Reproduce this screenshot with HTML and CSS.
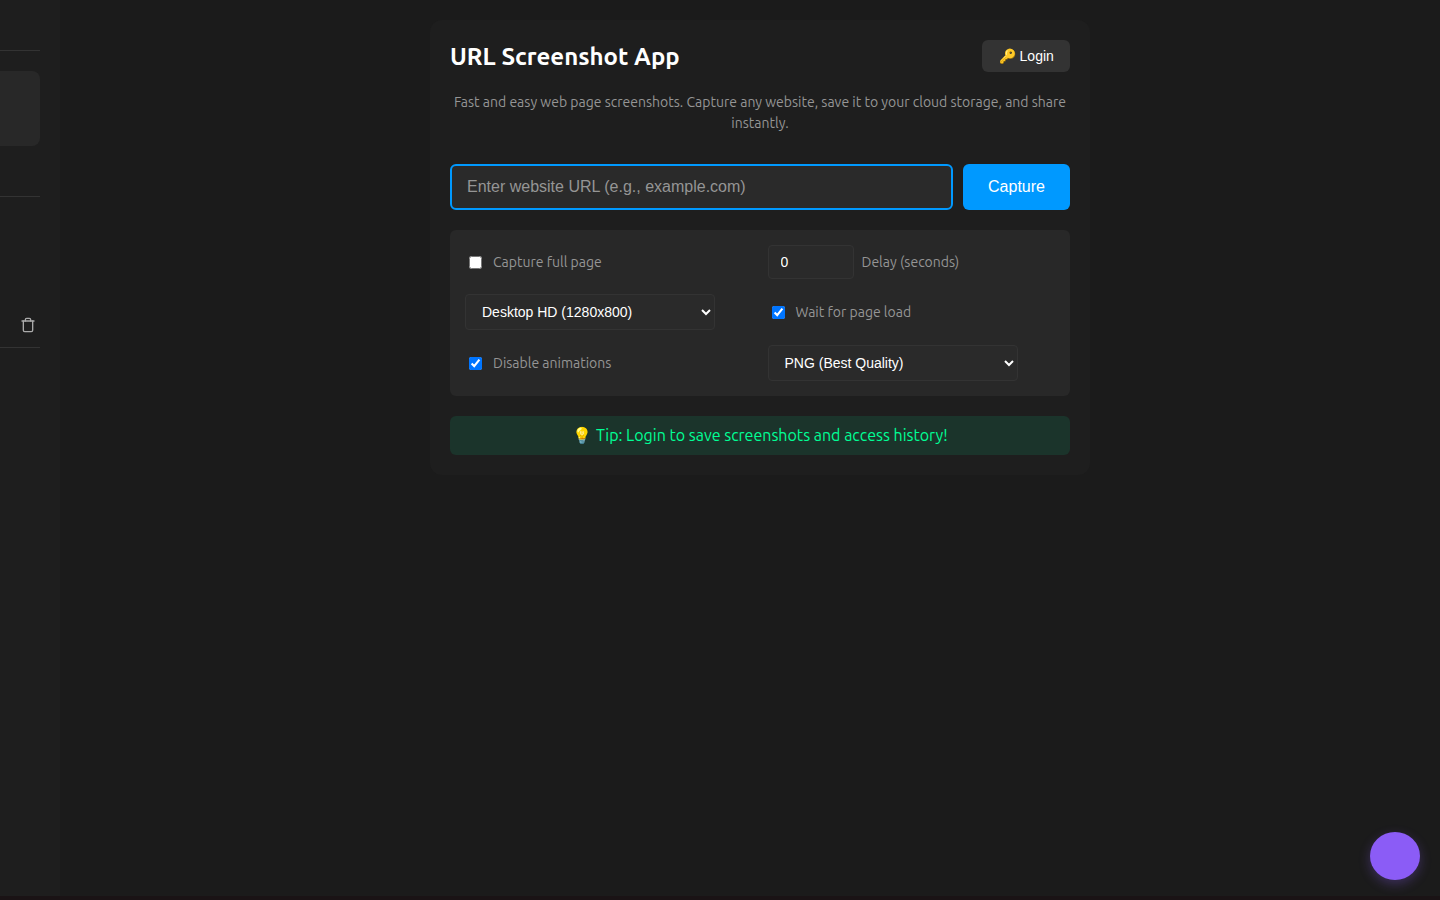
FILE: index.html
```
<!DOCTYPE html>
<html lang="en">
<head>
	<meta charset="UTF-8">
	<title>URL Screenshot App</title>
	<link rel="stylesheet" href="styles.css">
</head>
<body>
<div class="page">
	<aside class="sidebar">
		<div class="side-top"></div>
		<div class="side-user"></div>
		<div class="side-space"></div>
		<div class="side-history">
			<svg class="trash" width="16" height="16" viewBox="0 0 24 24" fill="none" stroke="currentColor" stroke-width="2" stroke-linecap="round" stroke-linejoin="round">
				<path d="M3 6h18"/>
				<path d="M19 6v14a2 2 0 0 1-2 2H7a2 2 0 0 1-2-2V6m3 0V4a2 2 0 0 1 2-2h4a2 2 0 0 1 2 2v2"/>
			</svg>
		</div>
	</aside>
	<main class="main">
		<div class="card">
			<div class="header">
				<h1>URL Screenshot App</h1>
				<button class="login">🔑 Login</button>
			</div>
			<p class="desc">Fast and easy web page screenshots. Capture any website, save it to your cloud storage, and share<br>instantly.</p>
			<form class="form">
				<input class="url" type="text" placeholder="Enter website URL (e.g., example.com)">
				<button class="capture" type="button">Capture</button>
			</form>
			<div class="options">
				<label class="option"><input type="checkbox"><span>Capture full page</span></label>
				<label class="option"><input class="delay" type="number" value="0"><span>Delay (seconds)</span></label>
				<div class="option"><select><option>Desktop HD (1280x800)</option></select></div>
				<label class="option"><input type="checkbox" checked><span>Wait for page load</span></label>
				<label class="option"><input type="checkbox" checked><span>Disable animations</span></label>
				<div class="option"><select><option>PNG (Best Quality)</option></select></div>
			</div>
			<div class="tip">💡 Tip: Login to save screenshots and access history!</div>
		</div>
	</main>
</div>
<button class="fab" aria-label="Menu"></button>
</body>
</html>
```
FILE: styles.css
```
*{box-sizing: border-box;}
body{margin: 0;height: 900px;overflow: hidden;background: #1b1b1b;border-bottom: 4px solid #1a1315;color: #fff;font-family: Ubuntu, "Open Sans", "Noto Sans", sans-serif;}
h1,p{margin: 0;}
button,input,select{font-family: "Liberation Sans", Arial, sans-serif;}
.page{display: flex;height: 896px;}
.sidebar{width: 60px;background: #1e1e1e;padding-right: 20px;}
.side-top{height: 51px;border-bottom: 1px solid #333;margin-bottom: 20px;}
.side-user{height: 75px;background: #282828;border-radius: 0 8px 8px 0;}
.side-space{height: 51px;border-bottom: 1px solid #333;}
.side-history{display: flex;justify-content: flex-end;align-items: flex-end;height: 151px;padding: 0 4px 14px 0;border-bottom: 1px solid #333;}
.trash{color: #aaa;}
.main{flex: 1;padding: 20px 0 0 20px;}
.card{width: 660px;margin: 0 auto;padding: 20px;background: #1e1e1e;border-radius: 12px;}
.header{display: flex;justify-content: space-between;align-items: center;height: 32px;margin-bottom: 20px;}
h1{font-size: 24px;font-weight: 600;line-height: 32px;padding-top: 1px;white-space: nowrap;}
.login{width: 88px;height: 32px;padding: 0 0 0 .5px;border: 0;border-radius: 6px;background: #333;color: #fff;font-size: 14px;}
.desc{margin-bottom: 30px;font-size: 14px;line-height: 21px;text-align: center;color: #959595;white-space: nowrap;}
.form{display: flex;gap: 10px;margin-bottom: 20px;}
.url{flex: 1;height: 46px;padding: 0 15px;border: 2px solid #0099ff;border-radius: 6px;background: #2a2a2a;color: #fff;font-size: 16px;outline: 0;}
.url::placeholder{color: #959595;}
.capture{width: 107px;height: 46px;border: 0;border-radius: 6px;background: #0099ff;color: #fff;font-size: 16px;}
.options{display: grid;grid-template-columns: 1fr 1fr;grid-template-rows: 34px 36px 36px;gap: 15px;margin-bottom: 20px;padding: 15px;border-radius: 6px;background: #282828;}
.option{display: flex;align-items: center;gap: 8px;font-size: 14px;color: #959595;white-space: nowrap;}
.option input[type=checkbox]{width: 13px;height: 13px;margin: 0 3px 0 4px;}
.option .delay{width: 86px;height: 34px;padding: 0 12px;border: 1px solid #333;border-radius: 4px;background: #2a2a2a;color: #fff;font-size: 14px;}
select{width: 250px;height: 36px;padding: 0 12px;border: 1px solid #333;border-radius: 4px;background: #2a2a2a;color: #fff;font-size: 14px;}
.tip{height: 39px;border-radius: 6px;background: #1b342b;color: #00ff95;font-size: 16px;line-height: 39px;text-align: center;}
.fab{position: fixed;right: 20px;bottom: 20px;width: 50px;height: 48px;border: 0;border-radius: 50%;background: #8b5cf6;box-shadow: 0 4px 12px rgba(139,92,246,.3);}
```
